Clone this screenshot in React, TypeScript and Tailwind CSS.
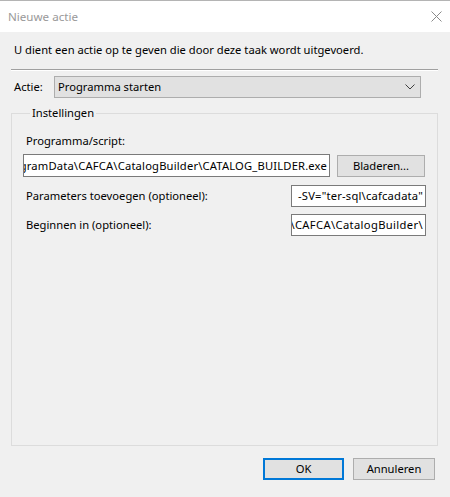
import React from "react";

const font = { fontFamily: '"Noto Sans", "Liberation Sans", sans-serif' };

function TextBox({ value, className }: { value: string; className: string }) {
  return (
    <div
      className={`flex items-center justify-end overflow-hidden whitespace-nowrap bg-white border border-[#7a7a7a] pr-[2px] text-black ${className}`}
    >
      <span className="shrink-0">{value}</span>
    </div>
  );
}

export default function App() {
  return (
    <div
      className="w-[450px] h-[497px] flex flex-col bg-[#f0f0f0] text-[11.2px] leading-[16px] text-black border-t border-[#b4b4b4]"
      style={font}
    >
      {/* title bar */}
      <div className="h-[31px] bg-white flex items-center justify-between pl-[8px] pr-[7px]">
        <span className="text-[#999999] text-[11.6px]">Nieuwe actie</span>
        <svg width="11" height="11" viewBox="0 0 11 11" className="mr-[1px]">
          <path d="M0.5 0.5 L10.5 10.5 M10.5 0.5 L0.5 10.5" stroke="#8a8a8a" strokeWidth="1" fill="none" />
        </svg>
      </div>

      {/* body */}
      <div className="flex-1 flex flex-col pl-[11px] pr-[12px]">
        <div className="mt-[10px] pl-[3px]">U dient een actie op te geven die door deze taak wordt uitgevoerd.</div>
        <div className="mt-[11px] h-0 border-t border-[#a0a0a0] border-b border-b-white" />

        {/* action selector */}
        <div className="mt-[5px] flex items-center">
          <span className="pl-[3px] w-[43px]">Actie:</span>
          <div className="w-[367px] h-[22px] bg-[#e1e1e1] border border-[#adadad] flex items-center justify-between pl-[3px] pr-[5px]">
            <span>Programma starten</span>
            <svg width="10" height="6" viewBox="0 0 10 6">
              <path d="M0.5 0.5 L5 5 L9.5 0.5" stroke="#404040" strokeWidth="1" fill="none" />
            </svg>
          </div>
        </div>

        {/* settings group */}
        <fieldset className="mt-[7px] flex-1 border border-[#dcdcdc] pl-[11px] pr-[11px] pt-[12px] min-w-0">
          <legend className="ml-[7px] px-[2px]">Instellingen</legend>

          <div className="pl-[3px]">Programma/script:</div>
          <div className="mt-[5px] flex items-start">
            <TextBox
              value="C:\ProgramData\CAFCA\CatalogBuilder\CATALOG_BUILDER.exe"
              className="w-[307px] h-[23px] tracking-[0.18px]"
            />
            <div className="ml-[7px] mt-[1px] w-[88px] h-[22px] bg-[#e1e1e1] border border-[#adadad] flex items-center justify-center">
              Bladeren...
            </div>
          </div>

          <div className="mt-[8px] flex items-center justify-between">
            <span className="pl-[3px]">Parameters toevoegen (optioneel):</span>
            <TextBox value={'-SV="ter-sql\\cafcadata"'} className="w-[135px] h-[22px] tracking-[0.2px]" />
          </div>

          <div className="mt-[7px] flex items-center justify-between">
            <span className="pl-[3px]">Beginnen in (optioneel):</span>
            <TextBox value="C:\ProgramData\CAFCA\CatalogBuilder\" className="w-[135px] h-[22px] tracking-[0.36px]" />
          </div>
        </fieldset>
      </div>

      {/* dialog buttons */}
      <div className="pt-[12px] pb-[17px] pr-[15px] flex justify-end gap-[9px]">
        <div className="w-[81px] h-[22px] bg-[#e1e1e1] border-2 border-[#0078d7] flex items-center justify-center">
          OK
        </div>
        <div className="w-[82px] h-[22px] bg-[#e1e1e1] border border-[#adadad] flex items-center justify-center">
          Annuleren
        </div>
      </div>
    </div>
  );
}
